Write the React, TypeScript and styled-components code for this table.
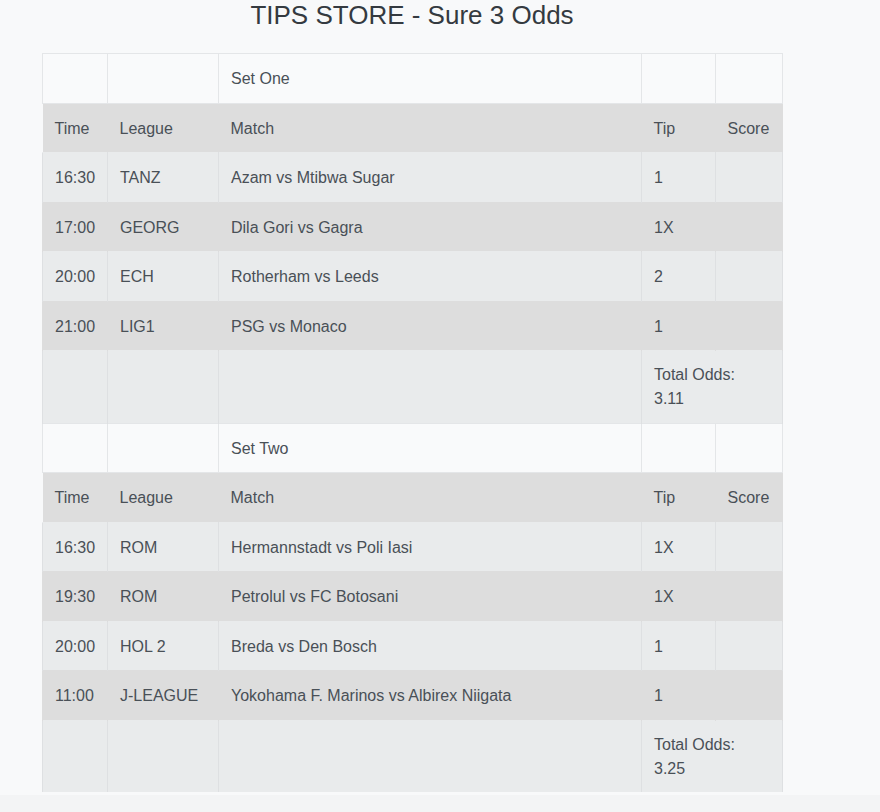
import styled, { createGlobalStyle } from 'styled-components'

const GlobalStyle = createGlobalStyle`
  body {
    margin: 0;
    background: #f8f9fa;
    font-family: 'Liberation Sans', Arial, sans-serif;
    color: #495057;
  }
`

const Page = styled.div`
  width: 880px;
  min-height: 812px;
  display: flex;
  flex-direction: column;
`

const Container = styled.div`
  width: 740px;
  margin-left: 42px;
`

const Title = styled.h3`
  margin: 2px 0 25px;
  font-size: 26px;
  line-height: 26px;
  font-weight: 400;
  color: #343a40;
  text-align: center;
`

const Table = styled.table`
  width: 740px;
  border-collapse: collapse;
  font-size: 16px;
  line-height: 24px;
  table-layout: fixed;
`

const Cell = styled.td<{ $total?: boolean }>`
  padding: ${p => (p.$total ? '12px 12px 11.5px' : '13px 12px 11.5px')};
  border-top: 1px solid #dee2e6;
  vertical-align: top;
  text-align: left;
  font-weight: 400;
`

const SetRow = styled.tr`
  background: #f9fafb;
  & > td {
    border: 1px solid #e4e6e8;
  }
`

const HeadRow = styled.tr`
  background: #dddddd;
  & > td {
    border-top: 1px solid #dddddd;
  }
`

const DataRow = styled.tr<{ $dark?: boolean }>`
  background: ${p => (p.$dark ? '#dddddd' : '#e9ebec')};
  & > td {
    border-top: 1px solid ${p => (p.$dark ? '#dddddd' : '#e9ebec')};
    border-left: 1px solid ${p => (p.$dark ? '#dddddd' : '#dee0e2')};
    border-right: 1px solid ${p => (p.$dark ? '#dddddd' : '#dee0e2')};
  }
`

const Footer = styled.div`
  margin-top: 3px;
  flex: 1;
  background: #f3f4f5;
`

type Game = { time: string; league: string; match: string; tip: string }

const sets: { name: string; total: string; games: Game[] }[] = [
  {
    name: 'Set One',
    total: '3.11',
    games: [
      { time: '16:30', league: 'TANZ', match: 'Azam vs Mtibwa Sugar', tip: '1' },
      { time: '17:00', league: 'GEORG', match: 'Dila Gori vs Gagra', tip: '1X' },
      { time: '20:00', league: 'ECH', match: 'Rotherham vs Leeds', tip: '2' },
      { time: '21:00', league: 'LIG1', match: 'PSG vs Monaco', tip: '1' },
    ],
  },
  {
    name: 'Set Two',
    total: '3.25',
    games: [
      { time: '16:30', league: 'ROM', match: 'Hermannstadt vs Poli Iasi', tip: '1X' },
      { time: '19:30', league: 'ROM', match: 'Petrolul vs FC Botosani', tip: '1X' },
      { time: '20:00', league: 'HOL 2', match: 'Breda vs Den Bosch', tip: '1' },
      { time: '11:00', league: 'J-LEAGUE', match: 'Yokohama F. Marinos vs Albirex Niigata', tip: '1' },
    ],
  },
]

export default function App() {
  return (
    <Page>
      <GlobalStyle />
      <Container>
        <Title>TIPS STORE - Sure 3 Odds</Title>
        <Table>
          <colgroup>
            <col style={{ width: 65 }} />
            <col style={{ width: 111 }} />
            <col style={{ width: 423 }} />
            <col style={{ width: 74 }} />
            <col style={{ width: 67 }} />
          </colgroup>
          <tbody>
            {sets.map(set => (
              <SetBlock key={set.name} {...set} />
            ))}
          </tbody>
        </Table>
      </Container>
      <Footer />
    </Page>
  )
}

const SetBlock = ({ name, total, games }: { name: string; total: string; games: Game[] }) => (
  <>
    <SetRow>
      <Cell />
      <Cell />
      <Cell>{name}</Cell>
      <Cell />
      <Cell />
    </SetRow>
    <HeadRow>
      <Cell>Time</Cell>
      <Cell>League</Cell>
      <Cell>Match</Cell>
      <Cell>Tip</Cell>
      <Cell>Score</Cell>
    </HeadRow>
    {games.map((g, i) => (
      <DataRow key={i} $dark={i % 2 === 1}>
        <Cell>{g.time}</Cell>
        <Cell>{g.league}</Cell>
        <Cell>{g.match}</Cell>
        <Cell>{g.tip}</Cell>
        <Cell />
      </DataRow>
    ))}
    <DataRow>
      <Cell $total />
      <Cell $total />
      <Cell $total />
      <Cell $total colSpan={2}>
        Total Odds:
        <br />
        {total}
      </Cell>
    </DataRow>
  </>
)
